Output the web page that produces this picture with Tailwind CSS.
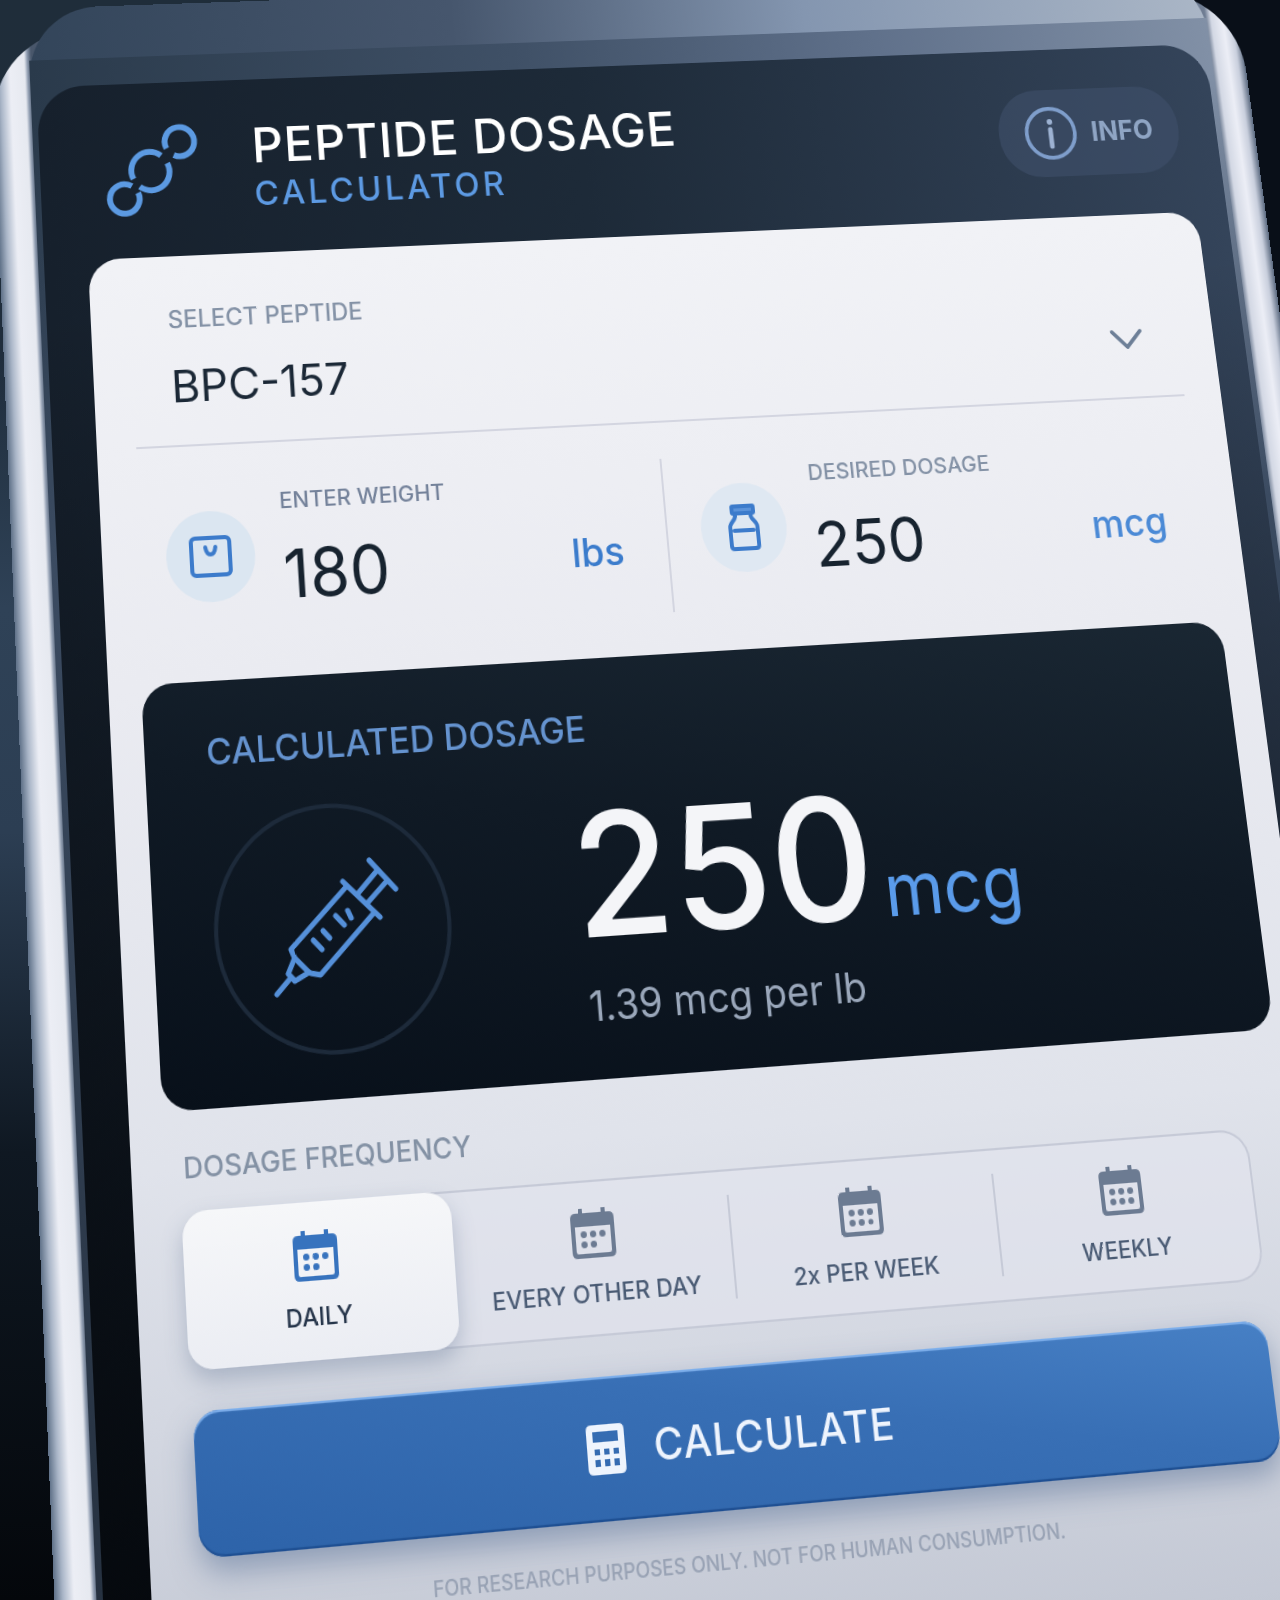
<!DOCTYPE html>
<html lang="en">
<head>
    <meta charset="UTF-8">
    <meta name="viewport" content="width=device-width, initial-scale=1.0">
    <title>Peptide Dosage Calculator</title>

    <script src="https://cdn.jsdelivr.net/npm/@tailwindcss/browser@4"></script>
</head>
<body class="bg-[#0a1018] font-['Inter','Liberation_Sans',sans-serif]">

    <main class="min-h-screen overflow-hidden bg-[linear-gradient(90deg,transparent_50%,#090f18_90%),linear-gradient(180deg,#1f2d3a_0%,#1f2d3c_22%,#2f4257_38%,#2c3e53_52%,#0f1822_72%,#04070b_100%)]">

        <!-- The whole device is tilted in space, everything inside is laid out flat -->
        <div class="min-h-screen flex flex-col origin-[88px_259px] [transform:matrix3d(0.996371,-0.043485,0,0.000036373,0.047128,0.99189,0,-0.000075991,0,0,1,0,0,4,0,1)]">

            <!-- Metal rim -->
            <div class="grow flex flex-col mt-5 -mr-[43px] pl-[38px] pr-9 rounded-t-[90px] bg-[linear-gradient(90deg,#5f7188_0,#aab6c8_8px,#eceef5_18px,#e6e9f0_33px,#8f9cb0_36px,#49576b_40px,#2b3747_50%,#6f7d93_1286px,#d3d8e4_1292px,#eceef6_1305px,#c9cfdd_1315px,#5b6a80_100%)]">

                <!-- Glass edge -->
                <div class="grow flex flex-col -mt-[24px] rounded-t-[72px] pt-[54px] bg-[linear-gradient(90deg,#33455a,#46566d_35%,#8496b0_65%,#aab6c6)]">
                    <div class="grow flex flex-col px-1.5 pt-7 bg-[linear-gradient(180deg,transparent_60px,#3b4b61_500px,#232e3c_100%),linear-gradient(90deg,#2a3a4b,#3f5066_40%,#5f708a_70%,#8190a6)]">

                        <!-- Screen -->
                        <div class="grow flex flex-col pl-11 pr-[33px] rounded-t-[48px] bg-[linear-gradient(180deg,transparent_15%,#04070b_100%),linear-gradient(90deg,#16202c,#1d2a38_45%,#34445a)]">

                            <header class="h-[178px] flex items-center pl-5 pr-2">
                                <svg class="w-[100px] h-[98px] shrink-0" viewBox="0 0 100 98" fill="none" stroke="#5c9ae2" stroke-width="6" aria-hidden="true">
                                    <path d="M28 65A15 15 0 1 0 34 72"/>
                                    <path d="M59 35A19 19 0 0 0 30 58M65 43A19 19 0 0 1 36 66"/>
                                    <path d="M65 28A15 15 0 1 1 72 35"/>
                                </svg>
                                <h1 class="ml-[52px] flex flex-col font-medium">
                                    <span class="text-[50px] leading-none tracking-[1px] text-white">PEPTIDE DOSAGE</span>
                                    <span class="mt-2 text-[34px] leading-none tracking-widest text-[#5d9ae3]">CALCULATOR</span>
                                </h1>
                                <button type="button" class="ml-auto h-[92px] px-7 flex items-center gap-4 rounded-[44px] bg-[#40506b]/60 text-[28px] leading-none font-bold text-[#8fa5c4]">
                                    <svg class="size-14" viewBox="0 0 56 56" fill="none" stroke="#7f9ecb" stroke-width="4" aria-hidden="true">
                                        <circle cx="28" cy="28" r="26"/>
                                        <path d="M28 24v18" stroke="#9db2d2" stroke-width="5" stroke-linecap="round"/>
                                        <circle cx="28" cy="16" r="3" fill="#9db2d2" stroke="none"/>
                                    </svg>
                                    INFO
                                </button>
                            </header>

                            <form class="grow flex flex-col rounded-t-[32px] bg-[linear-gradient(180deg,#f1f2f6_0,#eaebf1_420px,#e0e3eb_860px,#d3d7e1_1080px,#c3c8d4_1320px)]">

                                <!-- Peptide -->
                                <div class="relative mx-[39px] pt-[52px] pb-7 border-b-2 border-[#d3d5e0]">
                                    <label for="peptide" class="block pl-[38px] text-2xl leading-none font-medium text-[#8492a6]">SELECT PEPTIDE</label>
                                    <select id="peptide" class="mt-6 block w-full h-[60px] pl-[38px] appearance-none bg-transparent text-[44px] leading-none text-[#1b2836]">
                                        <option>BPC-157</option>
                                    </select>
                                    <svg class="absolute right-9 top-[118px] w-9 h-[22px]" viewBox="0 0 36 22" fill="none" stroke="#6d7f97" stroke-width="4" stroke-linecap="round" stroke-linejoin="round" aria-hidden="true">
                                        <path d="M3 3l15 16L33 3"/>
                                    </svg>
                                </div>

                                <!-- Weight and dosage -->
                                <div class="mx-[39px] pt-9 pb-10 grid grid-cols-[528fr_554fr]">
                                    <div class="h-[151px] pl-6 pr-11 flex items-start border-r-2 border-[#d3d5e0]">
                                        <span class="mt-7 size-[88px] shrink-0 flex items-center justify-center rounded-full bg-[#dbe6f1]">
                                            <svg class="w-[42px] h-[40px]" viewBox="0 0 42 40" fill="none" stroke="#3c7bcb" stroke-width="4" stroke-linejoin="round" aria-hidden="true">
                                                <rect x="2" y="2" width="38" height="36" rx="4"/>
                                                <path d="M16 11q1 7 5 7t5-7" stroke-linecap="round"/>
                                            </svg>
                                        </span>
                                        <div class="ml-[27px] mt-2.5 grow min-w-0">
                                            <label for="weight" class="block text-[22px] leading-none font-medium text-[#74829a]">ENTER WEIGHT</label>
                                            <input id="weight" type="text" value="180" class="mt-7 block w-full h-16 text-[64px] leading-none text-[#17232f]">
                                        </div>
                                        <span class="mt-[69px] text-[38px] leading-none font-medium text-[#3b7ccc]">lbs</span>
                                    </div>
                                    <div class="h-[151px] pl-[34px] pr-9 flex items-start">
                                        <span class="mt-7 size-[88px] shrink-0 flex items-center justify-center rounded-full bg-[#dfe8f2]">
                                            <svg class="w-[32px] h-[46px]" viewBox="0 0 32 46" fill="none" stroke="#3c7bcb" stroke-width="4" stroke-linejoin="round" aria-hidden="true">
                                                <rect x="5" y="2" width="22" height="7" rx="1" fill="#5b93da"/>
                                                <path d="M8 10c1 6-6 7-6 13v18q0 3 3 3h22q3 0 3-3V23c0-6-7-7-6-13M6 26h20" stroke-linecap="round"/>
                                            </svg>
                                        </span>
                                        <div class="ml-[27px] mt-2.5 grow min-w-0">
                                            <label for="dosage" class="block text-[22px] leading-none font-medium text-[#8492a6]">DESIRED DOSAGE</label>
                                            <input id="dosage" type="text" value="250" class="mt-7 block w-full h-16 text-[62px] leading-none text-[#17232f]">
                                        </div>
                                        <span class="mt-[69px] text-[38px] leading-none font-medium text-[#4b8ad6]">mcg</span>
                                    </div>
                                </div>

                                <!-- Result -->
                                <section class="mx-8 h-[392px] px-[58px] pt-[50px] rounded-[30px] bg-[linear-gradient(190deg,#1a2733_0%,#101a25_45%,#08101a_100%)]">
                                    <h2 class="pl-0.5 text-[34px] leading-none font-medium text-[#6593cf]">CALCULATED DOSAGE</h2>
                                    <div class="mt-[38px] flex items-start gap-[122px]">
                                        <span class="size-[230px] shrink-0 flex items-center justify-center rounded-full border-4 border-[#1d2a3a]">
                                            <svg class="size-[132px]" viewBox="0 0 132 132" fill="none" stroke="#5590d9" stroke-width="5" stroke-linecap="round" stroke-linejoin="round" aria-hidden="true">
                                                <path d="M105 6l24 28M111 17L93 35M120 27l-19 18M78 24l34 35"/>
                                                <path d="M81 29L24 83l3 8 13 14 2 1 9 2 54-52"/>
                                                <path d="M27 91l-7 14 6 7 14-7M21 110L8 123"/>
                                                <path d="M46 76l8 9M56 68l6 7M69 55l8 9M81 51l3 7"/>
                                            </svg>
                                        </span>
                                        <div>
                                            <p class="flex items-baseline gap-2 text-[160px] leading-[164px] font-medium text-[#f4f5f8]">250 <span class="text-[68px] leading-none font-normal text-[#5a9bea]">mcg</span></p>
                                            <p class="mt-5 pl-1.5 text-[38px] leading-none text-[#9aa7ba]">1.39 mcg per lb</p>
                                        </div>
                                    </div>
                                </section>

                                <!-- Frequency -->
                                <fieldset class="mt-[38px] ml-[45px] mr-[73px]">
                                    <legend class="pl-1 text-[26px] leading-none font-medium text-[#8391a4]">DOSAGE FREQUENCY</legend>
                                    <div class="mt-[25px] h-[138px] grid grid-cols-4 rounded-[28px] bg-[#e3e5ee]/60 ring-2 ring-inset ring-[#c6cad7]">
                                        <label class="mr-1.5 pr-1.5 pt-[25px] flex flex-col items-center rounded-3xl bg-[linear-gradient(180deg,#f6f7f9,#ebedf3)] shadow-[0_10px_20px_rgba(90,110,140,0.35)] text-[22px] leading-none font-medium text-[#26354a]">
                                            <input type="radio" name="frequency" class="sr-only" checked>
                                            <svg class="mb-5 w-[42px] h-11 text-[#3773be]" viewBox="0 0 42 44" fill="currentColor" aria-hidden="true">
                                                <path fill-rule="evenodd" d="M8 0h4v4h18V0h4v4h3q5 0 5 5v30q0 5-5 5H5q-5 0-5-5V9q0-5 5-5h3zM4 16v22q0 2 2 2h30q2 0 2-2V16z"/>
                                                <circle cx="12" cy="23" r="3"/><circle cx="21" cy="23" r="3"/><circle cx="30" cy="23" r="3"/>
                                                <circle cx="12" cy="32" r="3"/><circle cx="21" cy="32" r="3"/>
                                            </svg>
                                            DAILY
                                        </label>
                                        <label class="pr-1 pt-[25px] flex flex-col items-center text-[22px] leading-none font-medium text-[#4a5b74]">
                                            <input type="radio" name="frequency" class="sr-only">
                                            <svg class="mb-5 w-[42px] h-11 text-[#6c7b92]" viewBox="0 0 42 44" fill="currentColor" aria-hidden="true">
                                                <path fill-rule="evenodd" d="M8 0h4v4h18V0h4v4h3q5 0 5 5v30q0 5-5 5H5q-5 0-5-5V9q0-5 5-5h3zM4 16v22q0 2 2 2h30q2 0 2-2V16z"/>
                                                <circle cx="12" cy="23" r="3"/><circle cx="21" cy="23" r="3"/><circle cx="30" cy="23" r="3"/>
                                                <circle cx="12" cy="32" r="3"/><circle cx="21" cy="32" r="3"/>
                                            </svg>
                                            EVERY OTHER DAY
                                        </label>
                                        <label class="my-[23px] pr-1 pt-0.5 flex flex-col items-center border-l-2 border-[#c6cad7] text-[22px] leading-none font-medium text-[#4a5b74]">
                                            <input type="radio" name="frequency" class="sr-only">
                                            <svg class="mb-5 w-[42px] h-11 text-[#6c7b92]" viewBox="0 0 42 44" fill="currentColor" aria-hidden="true">
                                                <path fill-rule="evenodd" d="M8 0h4v4h18V0h4v4h3q5 0 5 5v30q0 5-5 5H5q-5 0-5-5V9q0-5 5-5h3zM4 16v22q0 2 2 2h30q2 0 2-2V16z"/>
                                                <circle cx="12" cy="23" r="3"/><circle cx="21" cy="23" r="3"/><circle cx="30" cy="23" r="3"/>
                                                <circle cx="12" cy="32" r="3"/><circle cx="21" cy="32" r="3"/><circle cx="30" cy="32" r="2.5"/>
                                            </svg>
                                            2x PER WEEK
                                        </label>
                                        <label class="my-[23px] pr-2 pt-0.5 flex flex-col items-center border-l-2 border-[#c6cad7] text-[22px] leading-none font-medium text-[#4a5b74]">
                                            <input type="radio" name="frequency" class="sr-only">
                                            <svg class="mb-5 w-[42px] h-11 text-[#6c7b92]" viewBox="0 0 42 44" fill="currentColor" aria-hidden="true">
                                                <path fill-rule="evenodd" d="M8 0h4v4h18V0h4v4h3q5 0 5 5v30q0 5-5 5H5q-5 0-5-5V9q0-5 5-5h3zM4 16v22q0 2 2 2h30q2 0 2-2V16z"/>
                                                <circle cx="12" cy="23" r="3"/><circle cx="21" cy="23" r="3"/><circle cx="30" cy="23" r="3"/>
                                                <circle cx="12" cy="32" r="3"/><circle cx="21" cy="32" r="3"/><circle cx="30" cy="32" r="3"/>
                                            </svg>
                                            WEEKLY
                                        </label>
                                    </div>
                                </fieldset>

                                <button type="submit" class="mt-[35px] ml-[46px] mr-[79px] h-[124px] pr-2 flex items-center justify-center gap-7 rounded-3xl bg-[linear-gradient(190deg,#4780c5_0%,#386fb5_40%,#2d63a9_100%)] shadow-[inset_0_2px_1px_#7fb0ec,inset_0_-2px_1px_#1f4f92,0_12px_26px_rgba(80,105,145,0.5)] text-[38px] leading-none font-medium tracking-wide text-[#eef4fd]">
                                    <svg class="w-9 h-[43px]" viewBox="0 0 36 43" fill="currentColor" aria-hidden="true">
                                        <path fill-rule="evenodd" d="M5 0h26q5 0 5 5v33q0 5-5 5H5q-5 0-5-5V5q0-5 5-5zM6 6v9h24V6zM7 21v5h5v-5zM16 21v5h5v-5zM25 21v5h5v-5zM7 30v6h5v-6zM16 30v6h5v-6zM25 30v6h5v-6z"/>
                                    </svg>
                                    CALCULATE
                                </button>

                                <p class="mt-[35px] pr-10 text-center text-[18px] leading-none font-medium text-[#98a2b4]">FOR RESEARCH PURPOSES ONLY. NOT FOR HUMAN CONSUMPTION.</p>
                            </form>
                        </div>
                    </div>
                </div>
            </div>
        </div>
    </main>

</body>
</html>
